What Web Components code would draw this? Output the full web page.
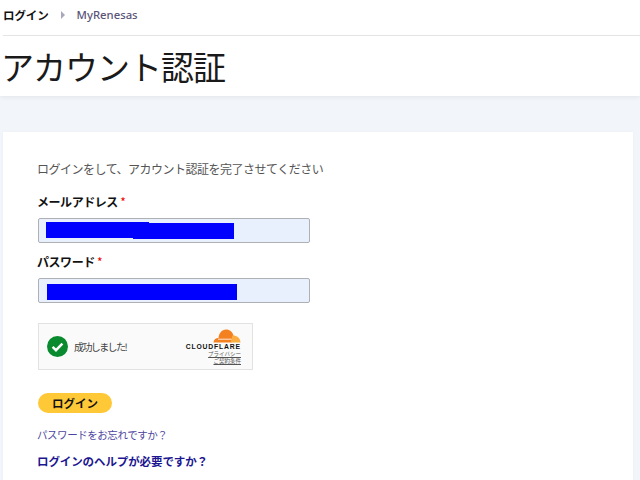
<!DOCTYPE html>
<html lang="ja"><head><meta charset="utf-8">
<style>
html,body{margin:0;padding:0;height:480px;overflow:hidden;background:#f2f5f9;font-family:"Noto Sans CJK JP","Noto Sans",sans-serif}
</style></head><body>
<page-header></page-header>
<auth-card></auth-card>
<script>
const NS='"Noto Sans","Noto Sans CJK JP",sans-serif';
class PageHeader extends HTMLElement{constructor(){super();this.attachShadow({mode:'open'}).innerHTML=`<style>
:host{display:block;background:#fff;height:96px;box-shadow:0 1px 5px rgba(0,0,0,.07);padding-left:3px;box-sizing:border-box}
nav{height:29px;padding-bottom:6px;border-bottom:1px solid #e4e4e4;display:flex;align-items:center;font:500 11.3px ${NS}}
.a{color:#111;font-weight:700;font-size:11.5px;letter-spacing:-.1px}
.s{width:0;height:0;border-left:4px solid #a9a7bd;border-top:4px solid transparent;border-bottom:4px solid transparent;margin:0 12px}
.b{color:#5a5478}
h1{margin:0 0 0 -2px;font:400 33px/60px "Noto Sans CJK JP",sans-serif;letter-spacing:-1px;color:#1a1a1a;height:60px}
</style><nav><span class="a">ログイン</span><i class="s"></i><span class="b">MyRenesas</span></nav><h1>アカウント認証</h1>`}}
customElements.define('page-header',PageHeader);
class FormField extends HTMLElement{constructor(){super();this.attachShadow({mode:'open'}).innerHTML=`<style>
:host{display:block}
label{display:block;margin:0 0 8px -1px;font:700 12px/16px "Noto Sans CJK JP",sans-serif;letter-spacing:-.45px;color:#111;height:16px}
b{color:#e00;font-weight:400;letter-spacing:0}
.i{width:272px;height:25px;box-sizing:border-box;background:#e8f0fe;border:1px solid #aeb0b4;border-radius:2px;position:relative}
.i ::slotted(*){position:absolute;background:#00f}
</style><label><slot name="l"></slot> <b>*</b></label><div class="i"><slot></slot></div>`}}
customElements.define('form-field',FormField);
class TurnstileBox extends HTMLElement{constructor(){super();this.attachShadow({mode:'open'}).innerHTML=`<style>
:host{display:flex;align-items:center;width:215px;height:47px;box-sizing:border-box;background:#fafafa;border:1px solid #e2e2e2;padding-left:8px}
.t{font:400 10px "Noto Sans CJK JP",sans-serif;color:#444;margin-left:6px;flex:1;letter-spacing:-1.6px}
.r{width:58px;margin-right:11px;display:flex;flex-direction:column;align-items:flex-end}
.cf{font:800 6.800px/8px "Liberation Sans",sans-serif;letter-spacing:.85px;color:#111;margin-top:0;white-space:nowrap}
a{font:400 5.5px/7px "Noto Sans CJK JP",sans-serif;color:#555;text-decoration:underline;white-space:nowrap}
svg{display:block}
</style>
<svg width="21" height="21" viewBox="0 0 21 21"><circle cx="10.5" cy="10.5" r="10.5" fill="#0a8a2f"/><path d="M5.6 10.8l3.4 3.4 6.4-6.600" fill="none" stroke="#fff" stroke-width="2.4"/></svg>
<span class="t">成功しました!</span>
<div class="r"><svg width="28" height="14" viewBox="0 0 28 14"><path d="M.5 13.5c0-2.500 2-4.500 5-4.500C6 4 9 .5 13 .5c4 0 6.500 2.500 7.500 6l-2 7z" fill="#f48120"/><path d="M19.500 6.500c4-.3 7.800 2.300 8 7H17.500z" fill="#fbad41"/><path d="M5 10.200h13.500" stroke="#fff" stroke-width=".8"/></svg>
<span class="cf">CLOUDFLARE</span><a>プライバシー</a><a>ご契約条件</a></div>`}}
customElements.define('turnstile-box',TurnstileBox);
class AuthCard extends HTMLElement{constructor(){super();this.attachShadow({mode:'open'}).innerHTML=`<style>
:host{display:block;background:#fff;margin:36px 7px 0 3px;height:360px;padding:29px 0 0 34px;box-sizing:border-box;box-shadow:0 0 4px rgba(0,0,0,.03)}
p{margin:0 0 17px;font:400 12px/16px "Noto Sans CJK JP",sans-serif;color:#555;height:16px;letter-spacing:-.5px}
.m{margin-bottom:11px}.n{margin-bottom:20px}
button{display:block;margin:23px 0 14px;width:74px;height:20px;border:0;border-radius:10px;background:#ffc837;font:700 11.500px/20px "Noto Sans CJK JP",sans-serif;color:#111;padding:0}
a{display:block;font:400 10.500px/16px "Noto Sans CJK JP",sans-serif;color:#4d46a0;margin-bottom:10px;letter-spacing:-.45px}
a.h{font:700 11.500px/16px "Noto Sans CJK JP",sans-serif;color:#1c1691;letter-spacing:-.1px}
div.w{margin-left:1px}
</style>
<p>ログインをして、アカウント認証を完了させてください</p>
<div class="w">
<form-field class="m"><span slot="l">メールアドレス</span><i style="left:7px;top:3px;width:103px;height:16px"></i><i style="left:94px;top:4px;width:101px;height:16px"></i></form-field>
<form-field class="n"><span slot="l">パスワード</span><i style="left:8px;top:5px;width:190px;height:16px"></i></form-field>
<turnstile-box></turnstile-box>
<button>ログイン</button></div>
<a>パスワードをお忘れですか？</a><a class="h">ログインのヘルプが必要ですか？</a>`}}
customElements.define('auth-card',AuthCard);
</script></body></html>
